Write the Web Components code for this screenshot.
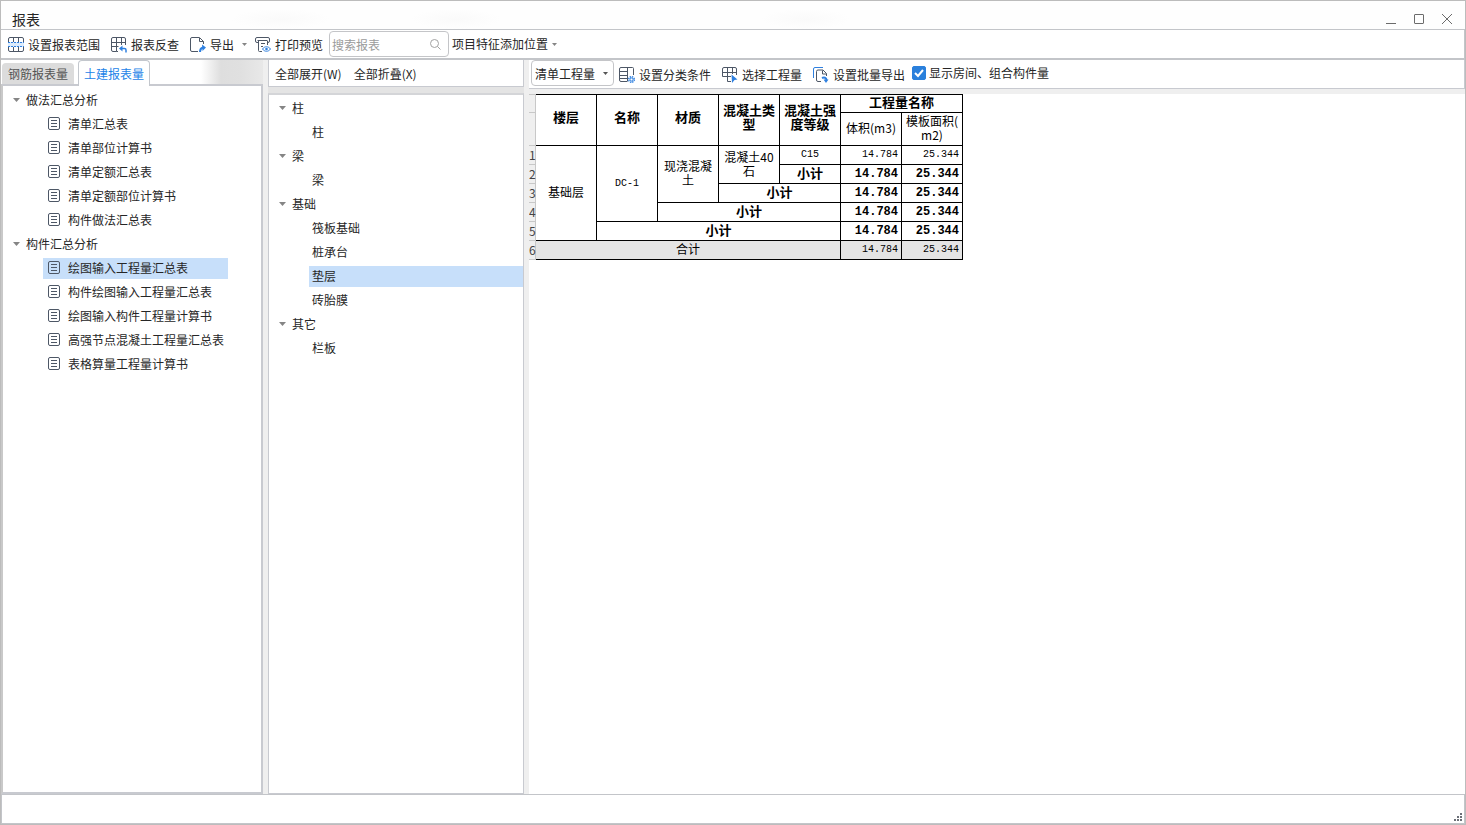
<!DOCTYPE html>
<html lang="zh-CN">
<head>
<meta charset="utf-8">
<title>报表</title>
<style>
html, body { margin: 0; height: 100%; }
body { font: 12px/16px "Noto Sans CJK SC", "Noto Sans", sans-serif; color: #262626; background: #fff; }
</style>
</head>
<body>
<report-window></report-window>
<script>
const define = (name, html, setup) => {
  const tpl = document.createElement('template');
  tpl.innerHTML = '<style>*{box-sizing:border-box}button,input,select{font:inherit;color:inherit}button{background:none;border:0;padding:0;margin:0;text-align:left;white-space:nowrap}svg{display:block;flex:none}</style>' + html;
  customElements.define(name, class extends HTMLElement {
    constructor() {
      super();
      this.attachShadow({ mode: 'open' }).append(tpl.content.cloneNode(true));
    }
    connectedCallback() { if (setup) setup(this, this.shadowRoot); }
  });
};

const icons = {
  range: '<path class="p" d="M0 5h16v5H0z"/><path d="M.5 5V2A1.500 1.500 0 0 1 2 .5h12A1.500 1.500 0 0 1 15.500 2v3M.5 10v3A1.500 1.500 0 0 0 2 14.500h12a1.500 1.500 0 0 0 1.500-1.500v-3M5.500.5V5M10.500.5V5M5.500 10v4.500M10.500 10v4.500"/><path class="b" stroke-dasharray="2 1" d="M0 5.500h16M0 9.500h16"/>',
  check: '<path d="M7 14.500H5.500V.5M5.500 14.500H2A1.500 1.500 0 0 1 .5 13V2A1.500 1.500 0 0 1 2 .5h11A1.500 1.500 0 0 1 14.500 2v6M.5 5.500h14M.5 9.500h7M10.500.5V8"/><path class="b" stroke-width="1.500" d="M10 11.500h3.500a1.500 1.500 0 0 1 1.500 1.500v2.500"/><path class="f" d="M11.500 8.500v6L8 11.500z"/>',
  export: '<path d="M8 14.500H2A1.500 1.500 0 0 1 .5 13V2A1.500 1.500 0 0 1 2 .5h7.500l4 4V7M9.500 1v3.500h4"/><path class="b" stroke-width="2" d="M10 15c0-2.500 1-4 3-4.500"/><path class="f" d="M12 7.500l4 3-3.500 3.500z"/>',
  preview: '<path d="M3 5.500H2A1.500 1.500 0 0 1 .5 4V2A1.500 1.500 0 0 1 2 .5h11A1.500 1.500 0 0 1 14.500 2v2A1.500 1.500 0 0 1 13 5.500h-.5M2.500 3.500h10M3.500 4v9.500a1 1 0 0 0 1 1H7M12.500 4v4M6 6.500h4M6 9.500h2"/><path class="b" d="M7.500 12c2-3 6-3 8 0-2 3-6 3-8 0z"/><circle class="f" cx="11.500" cy="12" r="1.300"/>',
  classify: '<path d="M8 14.500H2A1.500 1.500 0 0 1 .5 13V2A1.500 1.500 0 0 1 2 .5h11.500a1 1 0 0 1 1 1V8M8.500.5v14M.5 4.500h8M.5 8.500h8M.5 11.500h8"/><circle class="b" stroke-width="1.500" cx="12.500" cy="12.500" r="2.800" stroke-dasharray="1.400 .8"/><circle class="b" cx="12.500" cy="12.500" r="1.500"/>',
  select: '<path d="M9 14.500H5.500V.5M.5 9.500V2A1.500 1.500 0 0 1 2 .5h11A1.500 1.500 0 0 1 14.500 2v6M.5 5.500h14M.5 9.500H9M10.500.5V7"/><path class="f" d="M9.500 7.500l6 5-3 .5-2.500 3z"/>',
  batch: '<path class="b" d="M.5 11V2A1.500 1.500 0 0 1 2 .5h8"/><path d="M8 14.500H5A1.500 1.500 0 0 1 3.500 13V4.500A1.500 1.500 0 0 1 5 3h5l3.500 3.500V9M9.500 3.500V7h4"/><path class="b" stroke-width="2" d="M9 11c2-1 4.500-.5 4.500 2"/><path class="f" d="M10.500 12.500h5l-2.500 3.500z"/>',
  doc: '<rect x=".5" y=".5" width="11" height="12" rx="1.500"/><path d="M3 3.500h6M3 6.500h6M3 9.500h6"/>'
};

define('ui-icon', `<style>
:host{display:block;flex:none}
svg{fill:none;stroke:#4d5766;stroke-width:1}
.b{stroke:#2f80e0}.f{fill:#2f80e0;stroke:none}.p{fill:#dcebfb;stroke:none}
</style><svg aria-hidden="true"></svg>`, (el, root) => {
  const svg = root.querySelector('svg'), doc = el.getAttribute('name') === 'doc';
  const w = doc ? 12 : 16, h = doc ? 13 : 16;
  svg.setAttribute('viewBox', `0 0 ${w} ${h}`);
  svg.setAttribute('width', w); svg.setAttribute('height', h);
  svg.innerHTML = icons[el.getAttribute('name')];
});

define('caret-mark', `<style>
:host{display:block;flex:none;color:#858585}
svg{fill:currentColor}
:host([size=small]) svg{width:5px;height:3px}
</style><svg width="7" height="4" viewBox="0 0 8 5" preserveAspectRatio="none" aria-hidden="true"><path d="M0 0h8L4 5z"/></svg>`);

define('tool-button', `<style>
:host{display:block;flex:none}
button{display:flex;align-items:center;gap:4px;height:24px}
</style><button type="button"><slot name="icon"></slot><slot></slot></button>`);

define('title-bar', `<style>
:host{display:flex;flex:none;align-items:center;height:28px;padding:0 12px 0 11px;
background:radial-gradient(closest-side,#fafafa,#fff0) 230px 8px/100px 20px no-repeat,radial-gradient(closest-side,#fafafa,#fff0) 410px 8px/90px 20px no-repeat,radial-gradient(closest-side,#fafafa,#fff0) 760px 8px/90px 20px no-repeat,#fefefe}
h1{margin:0;flex:1;font-size:14px;line-height:20px;font-weight:400;padding-top:8px}
nav{display:flex;gap:16px;padding-top:8px}
svg{fill:none;stroke:#6b6b6b}
</style><h1>报表</h1><nav aria-label="窗口">
<button type="button" aria-label="最小化"><svg width="12" height="12"><path d="M1 10.500h10"/></svg></button>
<button type="button" aria-label="最大化"><svg width="12" height="12"><rect x="1.500" y="1.500" width="9" height="9" rx=".5"/></svg></button>
<button type="button" aria-label="关闭"><svg width="12" height="12"><path d="M1 1l10 10M11 1L1 11"/></svg></button></nav>`);

define('search-box', `<style>
:host{display:flex;flex:none;align-items:center;width:120px;height:26px;border:1px solid #c4c5c8;border-radius:4px;padding:0 7px 0 2px;background:#fff}
input{flex:1;min-width:0;border:0;outline:0;padding:0;background:none;height:20px;appearance:none}
input::placeholder{color:#9b9b9b;opacity:1}
svg{fill:none;stroke:#a2a2a2;stroke-width:1}
</style><input type="search" placeholder="搜索报表" aria-label="搜索报表"><svg width="12" height="12" aria-hidden="true"><circle cx="5.500" cy="5.500" r="4"/><path d="M8.500 8.500l3 3"/></svg>`);

define('main-toolbar', `<style>
:host{display:flex;flex:none;align-items:center;height:31px;padding:0 7px;border:solid #c3c5c9;border-width:1px 1px 2px 0}
.group{display:flex;align-items:center;gap:11px}
.group tool-button{padding-top:2px}
.drop{display:flex;align-items:center;gap:8px}
.drop+tool-button{margin-left:-3px}
search-box{margin:0 3px 0 6px}
</style><div class="group">
<tool-button><ui-icon slot="icon" name="range"></ui-icon>设置报表范围</tool-button>
<tool-button><ui-icon slot="icon" name="check"></ui-icon>报表反查</tool-button>
<div class="drop"><tool-button><ui-icon slot="icon" name="export"></ui-icon>导出</tool-button><caret-mark size="small"></caret-mark></div>
<tool-button><ui-icon slot="icon" name="preview"></ui-icon>打印预览</tool-button></div>
<search-box></search-box>
<tool-button>项目特征添加位置<caret-mark size="small"></caret-mark></tool-button>`);

define('report-tabs', `<style>
:host{display:flex;flex:none;align-items:flex-end;gap:4px;height:24px;padding-left:1px;background:linear-gradient(90deg,#fff 200px,#dedede 220px,#e0e0e0 240px,#e8e8e8)}
button{height:21px;padding:0 6px;border-radius:4px 4px 0 0;background:#dcdcdc;color:#555}
button[aria-selected=true]{position:relative;height:26px;margin-bottom:-2px;padding:0 5px;border:1px solid #c3c7cd;border-bottom:0;background:#fff;color:#1c83e8}
</style><button type="button" role="tab" aria-selected="false">钢筋报表量</button><button type="button" role="tab" aria-selected="true">土建报表量</button>`,
el => el.setAttribute('role', 'tablist'));

define('tree-branch', `<style>
:host{display:block}
.head{display:flex;align-items:center;gap:6px;height:24px;padding-left:10px}
</style><button type="button" class="head" aria-expanded="true"><caret-mark></caret-mark><span></span></button><div role="group"><slot></slot></div>`,
(el, root) => { root.querySelector('span').textContent = el.getAttribute('label'); });

define('tree-item', `<style>
:host{display:flex;align-items:center;height:24px;padding-left:40px}
button{display:flex;align-items:center;gap:8px;height:21px;padding:0 4px}
::slotted(ui-icon){padding-bottom:2px}
:host([kind=report]) button{padding-left:5px}
:host([kind=element]) button{flex:1;padding-left:3px}
:host([selected]) button{background:#c7dffa}
:host([kind=report][selected]) button{padding-right:40px}
</style><button type="button"><slot name="icon"></slot><slot></slot></button>`,
(el) => {
  if (el.getAttribute('kind') === 'report' && !el.querySelector('ui-icon')) {
    const i = document.createElement('ui-icon');
    i.slot = 'icon'; i.setAttribute('name', 'doc'); el.prepend(i);
  }
});

define('report-nav', `<style>
:host{display:flex;flex-direction:column;min-width:0}
main{flex:1;min-height:0;overflow:hidden;border:2px solid #c8cad0;border-left:2px solid #c9c9c9;padding-top:2px;background:#fff}
</style><report-tabs></report-tabs><main>
<tree-branch label="做法汇总分析">
<tree-item kind="report">清单汇总表</tree-item><tree-item kind="report">清单部位计算书</tree-item><tree-item kind="report">清单定额汇总表</tree-item><tree-item kind="report">清单定额部位计算书</tree-item><tree-item kind="report">构件做法汇总表</tree-item>
</tree-branch><tree-branch label="构件汇总分析">
<tree-item kind="report" selected>绘图输入工程量汇总表</tree-item><tree-item kind="report">构件绘图输入工程量汇总表</tree-item><tree-item kind="report">绘图输入构件工程量计算书</tree-item><tree-item kind="report">高强节点混凝土工程量汇总表</tree-item><tree-item kind="report">表格算量工程量计算书</tree-item>
</tree-branch></main>`);

define('element-nav', `<style>
:host{display:flex;flex-direction:column;min-width:0;background:#e4e4e4}
header{display:flex;gap:12px;align-items:center;height:27px;padding:2px 6px 0;background:#fff;border:1px solid #c8cad0;border-top:0}
main{flex:1;min-height:0;overflow:hidden;margin-top:6px;padding-top:1px;background:#fff;border:1px solid #c8cad0;border-top:2px solid #d4d5d8}
</style><header><tool-button>全部展开(W)</tool-button><tool-button>全部折叠(X)</tool-button></header><main>
<tree-branch label="柱"><tree-item kind="element">柱</tree-item></tree-branch>
<tree-branch label="梁"><tree-item kind="element">梁</tree-item></tree-branch>
<tree-branch label="基础"><tree-item kind="element">筏板基础</tree-item><tree-item kind="element">桩承台</tree-item><tree-item kind="element" selected>垫层</tree-item><tree-item kind="element">砖胎膜</tree-item></tree-branch>
<tree-branch label="其它"><tree-item kind="element">栏板</tree-item></tree-branch></main>`);

define('quantity-select', `<style>
:host{display:grid;flex:none;align-items:center;width:83px;height:26px}
select{grid-area:1/1;width:100%;height:26px;appearance:none;border:1px solid #c4c5c8;border-radius:4px;background:#fff;padding:2px 3px 0;line-height:16px}
caret-mark{grid-area:1/1;justify-self:end;margin-right:6px;pointer-events:none;color:#555}
</style><select aria-label="工程量类型"><option>清单工程量</option></select><caret-mark size="small"></caret-mark>`);

define('check-option', `<style>
:host{display:block;flex:none}
label{display:flex;align-items:center;gap:3px;white-space:nowrap}
span{display:grid}
input{grid-area:1/1;appearance:none;width:14px;height:14px;margin:0;border:1px solid #8a8a8a;border-radius:2px}
input:checked{background:#2a80dc;border-color:#2a80dc}
svg{grid-area:1/1;fill:none;stroke:#fff;stroke-width:2;pointer-events:none}
</style><label><span><input type="checkbox" checked><svg width="14" height="14" aria-hidden="true"><path d="M3 7l3 3 5-6"/></svg></span><slot></slot></label>`);

define('report-toolbar', `<style>
:host{display:flex;flex:none;align-items:center;gap:5px;height:29px;padding:0 2px 2px;background:#fff;border-bottom:1px solid #c8cad0;border-right:1px solid #c8cad0}
.group{display:flex;gap:11px;padding:3px 2px 0 0}
</style><quantity-select></quantity-select><div class="group">
<tool-button><ui-icon slot="icon" name="classify"></ui-icon>设置分类条件</tool-button>
<tool-button><ui-icon slot="icon" name="select"></ui-icon>选择工程量</tool-button>
<tool-button><ui-icon slot="icon" name="batch"></ui-icon>设置批量导出</tool-button></div>
<check-option>显示房间、组合构件量</check-option>`);

define('quantity-table', `<style>
:host{display:block}
table{border-collapse:separate;border-spacing:0;table-layout:fixed;width:434px;color:#000;line-height:14px}
.n{width:7px}.c{width:61px}
tr{height:19px}.sub{height:33px}
th,td{padding:0 3px 2px;border:solid #000;border-width:0 1px 1px 0;text-align:center;vertical-align:middle;font-weight:400;line-break:anywhere}
thead tr:first-child>*{border-top-width:1px}
thead th{font-size:13px;font-weight:700;padding-bottom:3px}
thead th[rowspan]{padding-bottom:6px}
thead .sub th{font-size:12px;font-weight:400;padding-bottom:2px}
tr th.row{padding:0;font-size:12px;font-weight:400;border-color:#c8c8c8;background:#efefef;color:#444;text-align:left;line-height:18px}
.s{font-size:13px;font-weight:700}
.v{font-family:"Liberation Mono",monospace;font-size:10px;text-align:right;padding-bottom:0}
.s.v{font-size:12px;padding-left:0}
.k{font-family:"Liberation Mono",monospace;font-size:10px;padding-bottom:0}
.total td{background:#e4e4e4}
</style><table><colgroup><col class="n"><col class="c" span="7"></colgroup>
<thead><tr><th class="row"></th><th rowspan="2">楼层</th><th rowspan="2">名称</th><th rowspan="2">材质</th><th rowspan="2">混凝土类型</th><th rowspan="2">混凝土强度等级</th><th colspan="2">工程量名称</th></tr>
<tr class="sub"><th class="row"></th><th>体积(m3)</th><th>模板面积(m2)</th></tr></thead>
<tbody>
<tr><th class="row">1</th><td rowspan="5">基础层</td><td rowspan="4" class="k">DC-1</td><td rowspan="3">现浇混凝土</td><td rowspan="2">混凝土40石</td><td class="k">C15</td><td class="v">14.784</td><td class="v">25.344</td></tr>
<tr><th class="row">2</th><td class="s">小计</td><td class="s v">14.784</td><td class="s v">25.344</td></tr>
<tr><th class="row">3</th><td colspan="2" class="s">小计</td><td class="s v">14.784</td><td class="s v">25.344</td></tr>
<tr><th class="row">4</th><td colspan="3" class="s">小计</td><td class="s v">14.784</td><td class="s v">25.344</td></tr>
<tr><th class="row">5</th><td colspan="4" class="s">小计</td><td class="s v">14.784</td><td class="s v">25.344</td></tr>
<tr class="total"><th class="row">6</th><td colspan="5">合计</td><td class="v">14.784</td><td class="v">25.344</td></tr>
</tbody></table>`);

define('report-view', `<style>
:host{display:flex;flex-direction:column;min-width:0;background:#efefef}
main{flex:1;min-height:0;margin-top:5px;background:#fff;overflow:hidden}
</style><report-toolbar></report-toolbar><main><quantity-table></quantity-table></main>`);

define('status-bar', `<style>
:host{display:flex;flex:none;justify-content:flex-end;align-items:flex-end;height:30px;border:1px solid #c3c5c9;padding:0 2px 2px}
svg{fill:#6c7078}
</style><svg width="8" height="8" aria-hidden="true"><path d="M6 0h2v2H6zM3 3h2v2H3zM6 3h2v2H6zM0 6h2v2H0zM3 6h2v2H3zM6 6h2v2H6z"/></svg>`);

define('report-window', `<style>
:host{display:flex;flex-direction:column;box-sizing:border-box;height:100vh;border:1px solid #bcbcbc;background:#fff}
.body{flex:1;min-height:0;display:grid;grid-template-columns:262px 256px 1fr;column-gap:5px;background:#efefef}
</style><title-bar></title-bar><main-toolbar></main-toolbar>
<div class="body"><report-nav></report-nav><element-nav></element-nav><report-view></report-view></div>
<status-bar></status-bar>`);
</script>
</body>
</html>
